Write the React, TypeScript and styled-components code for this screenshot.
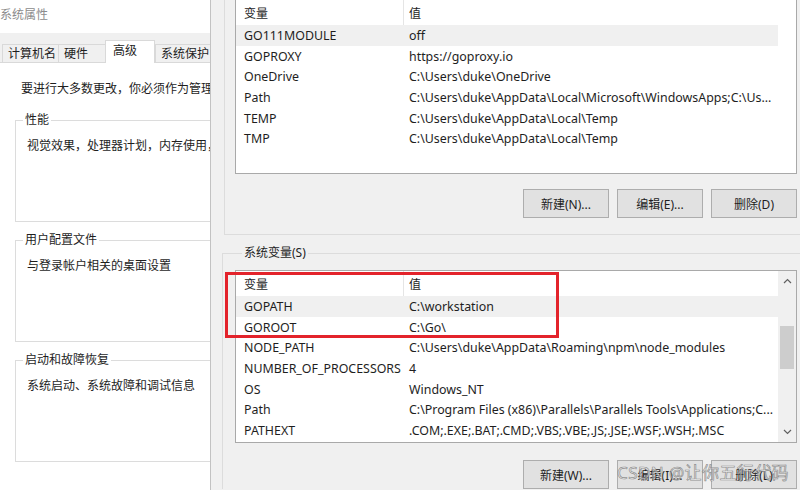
import React from "react";
import styled, { createGlobalStyle } from "styled-components";

const GlobalStyle = createGlobalStyle`
  html, body {
    margin: 0;
    padding: 0;
    width: 800px;
    height: 490px;
    overflow: hidden;
    background: #f0f0f0;
  }
  body {
    font-family: "Noto Sans", "Noto Sans CJK SC", sans-serif;
    font-size: 12px;
    color: #1e1e1e;
  }
`;

type Pair = [string, string];

const userVars: Pair[] = [
  ["GO111MODULE", "off"],
  ["GOPROXY", "https://goproxy.io"],
  ["OneDrive", "C:\\Users\\duke\\OneDrive"],
  ["Path", "C:\\Users\\duke\\AppData\\Local\\Microsoft\\WindowsApps;C:\\Us..."],
  ["TEMP", "C:\\Users\\duke\\AppData\\Local\\Temp"],
  ["TMP", "C:\\Users\\duke\\AppData\\Local\\Temp"],
];

const sysVars: Pair[] = [
  ["GOPATH", "C:\\workstation"],
  ["GOROOT", "C:\\Go\\"],
  ["NODE_PATH", "C:\\Users\\duke\\AppData\\Roaming\\npm\\node_modules"],
  ["NUMBER_OF_PROCESSORS", "4"],
  ["OS", "Windows_NT"],
  ["Path", "C:\\Program Files (x86)\\Parallels\\Parallels Tools\\Applications;C..."],
  ["PATHEXT", ".COM;.EXE;.BAT;.CMD;.VBS;.VBE;.JS;.JSE;.WSF;.WSH;.MSC"],
];

const tabs = [
  { label: "计算机名", w: 57 },
  { label: "硬件", w: 48 },
  { label: "高级", w: 50 },
  { label: "系统保护", w: 56 },
];

const groups = [
  { title: "性能", text: "视觉效果，处理器计划，内存使用，以及虚拟内存" },
  { title: "用户配置文件", text: "与登录帐户相关的桌面设置" },
  { title: "启动和故障恢复", text: "系统启动、系统故障和调试信息" },
];

const Chevron: React.FC<{ down?: boolean }> = ({ down }) => (
  <svg width="9" height="6" viewBox="0 0 9 6">
    <path
      d={down ? "M1 1 L4.5 4.5 L8 1" : "M1 5 L4.5 1.5 L8 5"}
      fill="none"
      stroke="#606060"
      strokeWidth="1.2"
    />
  </svg>
);

const VarList: React.FC<{ data: Pair[]; height: number; scroll?: boolean; marked?: boolean }> = ({
  data,
  height,
  scroll,
  marked,
}) => (
  <ListBox $h={height}>
    <ListMain>
      <HeaderRow>
        <NameCell $head>变量</NameCell>
        <ValueCell>值</ValueCell>
      </HeaderRow>
      {data.map(([name, value], i) => (
        <Row key={name + i} $sel={i === 0}>
          <NameCell>{name}</NameCell>
          <ValueCell>{value}</ValueCell>
        </Row>
      ))}
    </ListMain>
    {scroll ? (
      <ScrollBar>
        <ArrowBtn>
          <Chevron />
        </ArrowBtn>
        <Track>
          <Thumb />
        </Track>
        <ArrowBtn>
          <Chevron down />
        </ArrowBtn>
      </ScrollBar>
    ) : (
      <Gutter />
    )}
    {marked && <Mark />}
  </ListBox>
);

const App: React.FC = () => {
  return (
    <>
      <GlobalStyle />
      <Page>
        <LeftPanel>
          <TitleBar>系统属性</TitleBar>
          <TabStrip>
            {tabs.map((t) => (
              <Tab key={t.label} $w={t.w} $active={t.label === "高级"}>
                {t.label}
              </Tab>
            ))}
          </TabStrip>
          <TabBody>
            <Intro>要进行大多数更改，你必须作为管理员登录。</Intro>
            <GroupStack>
              {groups.map((g) => (
                <GroupBox key={g.title}>
                  <Caption $bg="#ffffff">{g.title}</Caption>
                  <GroupText>{g.text}</GroupText>
                </GroupBox>
              ))}
            </GroupStack>
          </TabBody>
        </LeftPanel>

        <RightPanel>
          <UserGroup>
            <TopList>
              <VarList data={userVars} height={175} />
            </TopList>
            <ButtonRow>
              <Button>新建(N)...</Button>
              <Button>编辑(E)...</Button>
              <Button>删除(D)</Button>
            </ButtonRow>
          </UserGroup>

          <SysGroup>
            <Caption $bg="#f0f0f0">系统变量(S)</Caption>
            <SysList>
              <VarList data={sysVars} height={173} scroll marked />
            </SysList>
            <ButtonRow>
              <Button>新建(W)...</Button>
              <Button>编辑(I)...</Button>
              <Button>删除(L)</Button>
            </ButtonRow>
          </SysGroup>
        </RightPanel>

        <Watermark>CSDN @让你五行代码</Watermark>
      </Page>
    </>
  );
};
export default App;

const Page = styled.div`
  position: relative;
  display: flex;
  width: 800px;
  height: 490px;
  overflow: hidden;
`;

/* ---------- left: 系统属性 dialog ---------- */

const LeftPanel = styled.div`
  width: 210px;
  flex-shrink: 0;
  display: flex;
  flex-direction: column;
  background: #ffffff;
  border-right: 1px solid #c2c2c2;
  overflow: hidden;
`;

const TitleBar = styled.div`
  height: 33px;
  line-height: 30px;
  color: #8c8c8c;
  white-space: nowrap;
`;

const TabStrip = styled.div`
  height: 29px;
  display: flex;
  align-items: flex-end;
  padding-left: 2px;
  background: #f0f0f0;
  border-bottom: 1px solid #d9d9d9;
`;

const Tab = styled.div<{ $w: number; $active?: boolean }>`
  flex-shrink: 0;
  box-sizing: border-box;
  width: ${(p) => p.$w}px;
  height: ${(p) => (p.$active ? 23 : 18)}px;
  margin-bottom: ${(p) => (p.$active ? -1 : 0)}px;
  margin-right: ${(p) => (p.$active ? 0 : -1)}px;
  padding-left: ${(p) => (p.$active ? 7 : 5)}px;
  line-height: ${(p) => (p.$active ? 20 : 18)}px;
  background: ${(p) => (p.$active ? "#ffffff" : "#f0f0f0")};
  border: 1px solid #d9d9d9;
  border-bottom: none;
  color: #1e1e1e;
  white-space: nowrap;
`;

const TabBody = styled.div`
  padding: 18px 0 0 15px;
  display: flex;
  flex-direction: column;
`;

const Intro = styled.div`
  margin-left: 6px;
  line-height: 16px;
  white-space: nowrap;
`;

const GroupStack = styled.div`
  margin-top: 23px;
  display: flex;
  flex-direction: column;
  gap: 18px;
`;

const GroupBox = styled.div`
  box-sizing: border-box;
  width: 240px;
  height: 102px;
  display: flex;
  flex-direction: column;
  border: 1px solid #dcdcdc;
`;

const Caption = styled.div<{ $bg: string }>`
  width: fit-content;
  margin: -9px 0 0 7px;
  padding: 0 2px;
  line-height: 16px;
  background: ${(p) => p.$bg};
  color: #1e1e1e;
  white-space: nowrap;
`;

const GroupText = styled.div`
  margin: 10px 0 0 11px;
  line-height: 16px;
  white-space: nowrap;
`;

/* ---------- right: 环境变量 dialog ---------- */

const RightPanel = styled.div`
  flex: 1;
  min-width: 0;
  display: flex;
  flex-direction: column;
  padding-left: 11px;
  background: #f0f0f0;
`;

const UserGroup = styled.div`
  margin-left: 2px;
  padding: 0 3px 16px 10px;
  border-left: 1px solid #dcdcdc;
  border-bottom: 1px solid #dcdcdc;
`;

const TopList = styled.div`
  margin-top: -1px;
`;

const SysGroup = styled.div`
  margin-top: 18px;
  padding: 0 3px 0 12px;
  border-top: 1px solid #dcdcdc;
  border-left: 1px solid #dcdcdc;
  display: flex;
  flex-direction: column;
`;

const SysList = styled.div`
  margin-top: 9px;
`;

const ListBox = styled.div<{ $h: number }>`
  position: relative;
  box-sizing: border-box;
  height: ${(p) => p.$h}px;
  display: flex;
  background: #ffffff;
  border: 1px solid #a9a9a9;
  font-size: 12.4px;
`;

const ListMain = styled.div`
  flex: 1;
  min-width: 0;
  overflow: hidden;
`;

const HeaderRow = styled.div`
  display: flex;
  height: 25px;
  align-items: stretch;
  font-size: 12px;
`;

const Row = styled.div<{ $sel?: boolean }>`
  display: flex;
  height: 20.7px;
  align-items: center;
  background: ${(p) => (p.$sel ? "#f0f0f0" : "transparent")};
`;

const NameCell = styled.div<{ $head?: boolean }>`
  box-sizing: border-box;
  width: 168px;
  flex-shrink: 0;
  padding-left: 8px;
  display: flex;
  align-items: center;
  white-space: nowrap;
  border-right: 1px solid ${(p) => (p.$head ? "#e5e5e5" : "transparent")};
`;

const ValueCell = styled.div`
  flex: 1;
  min-width: 0;
  padding-left: 5px;
  display: flex;
  align-items: center;
  white-space: nowrap;
  overflow: hidden;
`;

const Gutter = styled.div`
  width: 18px;
  flex-shrink: 0;
`;

const ScrollBar = styled.div`
  width: 18px;
  flex-shrink: 0;
  display: flex;
  flex-direction: column;
  background: #f0f0f0;
`;

const ArrowBtn = styled.div`
  height: 20px;
  display: flex;
  align-items: center;
  justify-content: center;
`;

const Track = styled.div`
  flex: 1;
  display: flex;
  justify-content: center;
`;

const Thumb = styled.div`
  width: 14px;
  height: 43px;
  margin-top: 35px;
  background: #cdcdcd;
`;

const ButtonRow = styled.div`
  margin-top: 15px;
  display: flex;
  justify-content: flex-end;
  gap: 8px;

  ${SysGroup} & {
    margin-top: 17px;
  }
`;

const Button = styled.button`
  box-sizing: border-box;
  width: 86px;
  height: 29px;
  padding: 0;
  background: #e1e1e1;
  border: 1px solid #adadad;
  border-radius: 0;
  font-family: "Noto Sans", "Noto Sans CJK SC", sans-serif;
  font-size: 12px;
  color: #1e1e1e;
`;

/* annotation drawn over the list */
const Mark = styled.div`
  position: absolute;
  left: -11px;
  top: 1px;
  width: 334px;
  height: 66px;
  box-sizing: border-box;
  border: 3px solid #e3232b;
  pointer-events: none;
`;

const Watermark = styled.div`
  position: absolute;
  right: 11px;
  bottom: 6px;
  font-family: "Noto Sans", "Noto Sans CJK SC", sans-serif;
  font-size: 17px;
  letter-spacing: 0.4px;
  color: rgba(255, 255, 255, 0.55);
  -webkit-text-stroke: 0.7px rgba(110, 110, 110, 0.75);
  white-space: nowrap;
  pointer-events: none;
`;
